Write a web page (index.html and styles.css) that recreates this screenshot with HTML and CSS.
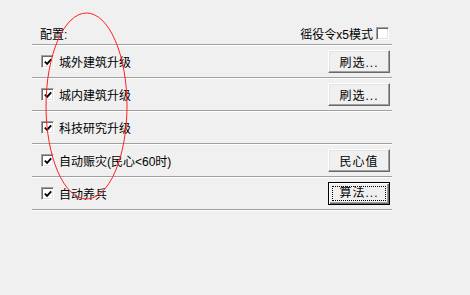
FILE: index.html
```html
<!DOCTYPE html>
<html lang="zh-CN">
<head>
    <meta charset="UTF-8">
    <title>配置</title>
    <link rel="stylesheet" href="styles.css">
</head>
<body>
    <div class="panel">
        <div class="header">
            <span class="title">配置:</span>
            <label class="mode">徭役令x5模式 <span class="box"></span></label>
        </div>

        <div class="row">
            <label class="opt"><span class="box checked"><svg viewBox="0 0 11 11"><path d="M2 5 L4.5 7.5 L9 2.5"/></svg></span>城外建筑升级</label>
            <button class="btn">刷选...</button>
        </div>
        <div class="row">
            <label class="opt"><span class="box checked"><svg viewBox="0 0 11 11"><path d="M2 5 L4.5 7.5 L9 2.5"/></svg></span>城内建筑升级</label>
            <button class="btn">刷选...</button>
        </div>
        <div class="row">
            <label class="opt"><span class="box checked"><svg viewBox="0 0 11 11"><path d="M2 5 L4.5 7.5 L9 2.5"/></svg></span>科技研究升级</label>
        </div>
        <div class="row">
            <label class="opt"><span class="box checked"><svg viewBox="0 0 11 11"><path d="M2 5 L4.5 7.5 L9 2.5"/></svg></span>自动赈灾(民心&lt;60时)</label>
            <button class="btn">民心值</button>
        </div>
        <div class="row">
            <label class="opt"><span class="box checked"><svg viewBox="0 0 11 11"><path d="M2 5 L4.5 7.5 L9 2.5"/></svg></span>自动养兵</label>
            <button class="btn focus"><span class="focus-rect">算法...</span></button>
        </div>
    </div>

    <!-- 红圈标注 -->
    <svg class="circle" width="83" height="188" viewBox="0 0 83 188">
        <ellipse cx="41.5" cy="94" rx="40.5" ry="93"/>
    </svg>
</body>
</html>
```

FILE: styles.css
```css
* {
    margin: 0;
    padding: 0;
    box-sizing: border-box;
}

body {
    background: #f0f0f0;
    font-family: "Liberation Sans", "Noto Sans CJK SC", sans-serif;
    font-size: 12px;
    color: #000;
    width: 470px;
    height: 295px;
    overflow: hidden;
}

.panel {
    margin: 20px 0 0 32px;
    width: 360px;
}

.header {
    display: flex;
    align-items: center;
    justify-content: space-between;
    height: 25px;
    padding: 2px 3px 0 8px;
    border-bottom: 1px solid #a0a0a0;
    box-shadow: 0 1px 0 #fff;
}

.mode {
    display: flex;
    align-items: center;
    gap: 3px;
}

.row {
    display: flex;
    align-items: center;
    justify-content: space-between;
    height: 33px;
    padding: 1px 2px 0 9px;
    border-bottom: 1px solid #a0a0a0;
    box-shadow: 0 1px 0 #fff;
}

.opt {
    display: flex;
    align-items: center;
    gap: 5px;
}

.box {
    width: 13px;
    height: 13px;
    background: #fff;
    border: 1px solid;
    border-color: #a0a0a0 #fff #fff #a0a0a0;
    box-shadow: inset 1px 1px 0 #696969, inset -1px -1px 0 #e3e3e3;
    display: flex;
    align-items: center;
    justify-content: center;
}

.box svg {
    width: 10px;
    height: 10px;
}

.box path {
    fill: none;
    stroke: #000;
    stroke-width: 2;
}

.btn {
    width: 62px;
    height: 23px;
    background: #f0f0f0;
    font-family: inherit;
    font-size: 12px;
    color: #000;
    letter-spacing: 1px;
    border: 1px solid;
    border-color: #fff #696969 #696969 #fff;
    box-shadow: inset -1px -1px 0 #a0a0a0, inset 1px 1px 0 #e3e3e3;
}

.btn.focus {
    border: 1px solid #000;
    box-shadow: inset 1px 1px 0 #fff, inset -1px -1px 0 #696969, inset -2px -2px 0 #a0a0a0;
    padding: 3px;
}

.focus-rect {
    display: block;
    height: 100%;
    border: 1px dotted #000;
    line-height: 13px;
}

.circle {
    position: absolute;
    left: 45px;
    top: 12px;
}

.circle ellipse {
    fill: none;
    stroke: #ff2020;
    stroke-width: 1;
}
```
